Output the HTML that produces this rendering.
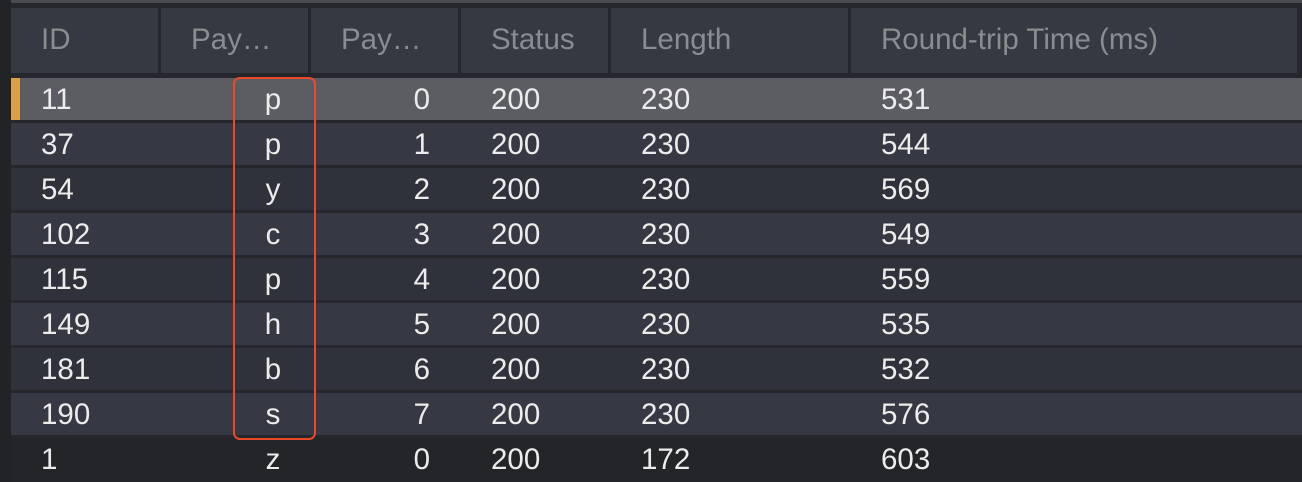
<!DOCTYPE html>
<html><head><style>
body{margin:0;width:1302px;height:482px;background:#25272c;position:relative;overflow:hidden;font-family:"Liberation Sans",Arial,sans-serif;font-size:29.5px;}
.topbar{position:absolute;left:0;top:0;width:1302px;height:3px;background:#4a4b4f;}
.leftstrip{position:absolute;left:0;top:0;width:11px;height:482px;background:#222326;}
.hc{position:absolute;top:8px;height:65px;background:#353942;color:#8b8c8f;line-height:64px;}
.row{position:absolute;left:11px;width:1291px;height:42px;color:#ececec;}
.row span{position:absolute;top:0;line-height:44px;}
.row span.c{left:242px;width:40px;text-align:center;}
.box{position:absolute;left:233px;top:77px;width:79px;height:359px;border:2.5px solid #ea4a2a;border-radius:7px;}
</style></head><body>
<div class="topbar"></div>
<div class="leftstrip"></div>
<div class="hc" style="left:11px;width:147px"><span style="margin-left:30px">ID</span></div>
<div class="hc" style="left:161px;width:147px"><span style="margin-left:30px">Pay…</span></div>
<div class="hc" style="left:311px;width:147px"><span style="margin-left:30px">Pay…</span></div>
<div class="hc" style="left:461px;width:147px"><span style="margin-left:30px">Status</span></div>
<div class="hc" style="left:611px;width:237px"><span style="margin-left:30px">Length</span></div>
<div class="hc" style="left:851px;width:446px"><span style="margin-left:30px">Round-trip Time (ms)</span></div>

<div class="row" style="top:78px;background:#5c5d62"><div style="position:absolute;left:0;top:0;width:9px;height:42px;background:#dba04a"></div><span style="left:30px">11</span><span class="c">p</span><span style="right:872px">0</span><span style="left:480px">200</span><span style="left:630px">230</span><span style="left:870px">531</span></div>
<div class="row" style="top:123px;background:#363943"><span style="left:30px">37</span><span class="c">p</span><span style="right:872px">1</span><span style="left:480px">200</span><span style="left:630px">230</span><span style="left:870px">544</span></div>
<div class="row" style="top:168px;background:#2f323a"><span style="left:30px">54</span><span class="c">y</span><span style="right:872px">2</span><span style="left:480px">200</span><span style="left:630px">230</span><span style="left:870px">569</span></div>
<div class="row" style="top:213px;background:#363943"><span style="left:30px">102</span><span class="c">c</span><span style="right:872px">3</span><span style="left:480px">200</span><span style="left:630px">230</span><span style="left:870px">549</span></div>
<div class="row" style="top:258px;background:#2f323a"><span style="left:30px">115</span><span class="c">p</span><span style="right:872px">4</span><span style="left:480px">200</span><span style="left:630px">230</span><span style="left:870px">559</span></div>
<div class="row" style="top:303px;background:#363943"><span style="left:30px">149</span><span class="c">h</span><span style="right:872px">5</span><span style="left:480px">200</span><span style="left:630px">230</span><span style="left:870px">535</span></div>
<div class="row" style="top:348px;background:#2f323a"><span style="left:30px">181</span><span class="c">b</span><span style="right:872px">6</span><span style="left:480px">200</span><span style="left:630px">230</span><span style="left:870px">532</span></div>
<div class="row" style="top:393px;background:#363943"><span style="left:30px">190</span><span class="c">s</span><span style="right:872px">7</span><span style="left:480px">200</span><span style="left:630px">230</span><span style="left:870px">576</span></div>
<div class="row" style="top:438px;height:44px;background:#232529"><span style="left:30px">1</span><span class="c">z</span><span style="right:872px">0</span><span style="left:480px">200</span><span style="left:630px">172</span><span style="left:870px">603</span></div>
<div class="box"></div>
</body></html>
